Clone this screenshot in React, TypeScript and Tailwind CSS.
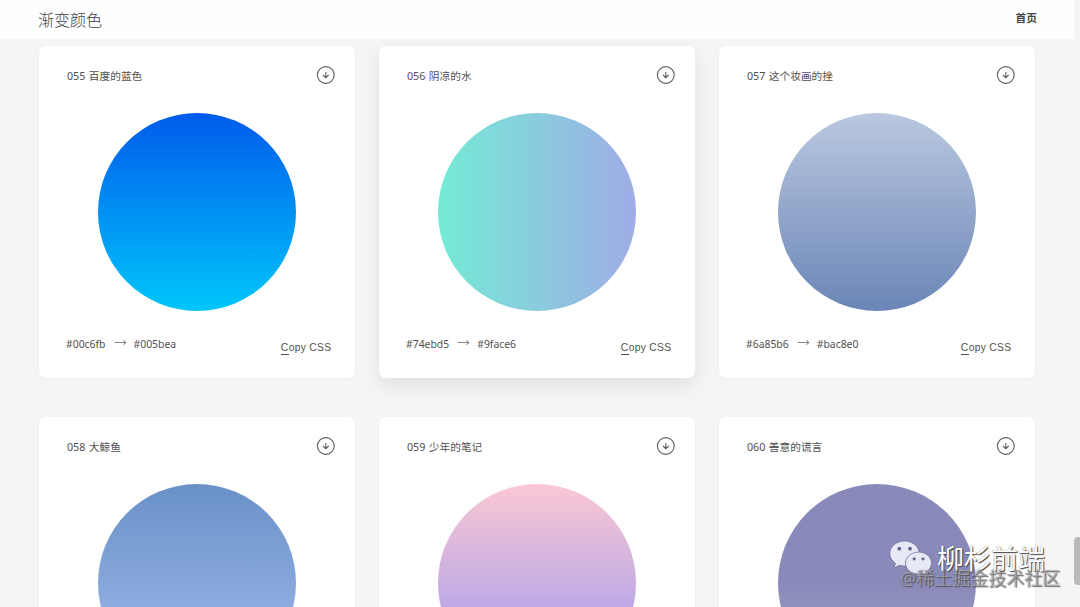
import { clsx } from "clsx"

interface Gradient {
  id: string
  name: string
  from: string
  to: string
  background: string
  active?: boolean
}

const gradients: Gradient[] = [
  {
    id: "055",
    name: "百度的蓝色",
    from: "#00c6fb",
    to: "#005bea",
    background: "linear-gradient(to top, #00c6fb 0%, #005bea 100%)",
  },
  {
    id: "056",
    name: "阴凉的水",
    from: "#74ebd5",
    to: "#9face6",
    background: "linear-gradient(to right, #74ebd5 0%, #9face6 100%)",
    active: true,
  },
  {
    id: "057",
    name: "这个妆画的挫",
    from: "#6a85b6",
    to: "#bac8e0",
    background: "linear-gradient(to top, #6a85b6 0%, #bac8e0 100%)",
  },
  {
    id: "058",
    name: "大鲸鱼",
    from: "#a3bded",
    to: "#6991c7",
    background: "linear-gradient(to top, #a3bded 0%, #6991c7 100%)",
  },
  {
    id: "059",
    name: "少年的笔记",
    from: "#9795f0",
    to: "#fbc8d4",
    background: "linear-gradient(to top, #9795f0 0%, #fbc8d4 100%)",
  },
  {
    id: "060",
    name: "善意的谎言",
    from: "#a7a6cb",
    to: "#8989ba",
    background: "linear-gradient(to top, #a7a6cb 0%, #8989ba 52%, #8989ba 100%)",
  },
]

function DownloadIcon() {
  return (
    <svg width="20" height="20" viewBox="0 0 20 20" fill="none" stroke="#5c5c5c">
      <circle cx="9.8" cy="10" r="8.4" strokeWidth="1.1" />
      <path d="M9.8 7v5.6M7 10l2.8 2.7 2.8-2.7" strokeWidth="1.1" />
    </svg>
  )
}

function ArrowIcon() {
  return (
    <svg width="13" height="7" viewBox="0 0 13 7" fill="none" stroke="#666" strokeWidth="0.8">
      <path d="M0.5 3.5h11.5M9.2 1.3l2.8 2.2-2.8 2.2" />
    </svg>
  )
}

function GradientCard({ gradient }: { gradient: Gradient }) {
  return (
    <article
      className={clsx(
        "h-[332px] rounded-[7px] bg-white pl-7 pr-[19px] pt-[19px]",
        gradient.active
          ? "shadow-[0_7px_20px_rgba(0,0,0,0.09)]"
          : "shadow-[0_1px_3px_rgba(0,0,0,0.04)]"
      )}
    >
      <div className="flex h-5 items-center justify-between">
        <h2 className="flex gap-[3.5px] whitespace-nowrap pt-0.5 text-[10.7px] text-[#505050]">
          <span>{gradient.id}</span>
          <span>{gradient.name}</span>
        </h2>
        <button type="button">
          <DownloadIcon />
        </button>
      </div>

      <div
        className="ml-[31px] mt-7 size-[198px] rounded-full"
        style={{ background: gradient.background }}
      />

      <div className="mt-[25px] flex items-start justify-between pr-[4.5px] text-[#505050]">
        <div className="-ml-px flex h-[18px] items-center text-[10.4px]">
          <span>{gradient.from}</span>
          <span className="-mt-[5px] ml-2 mr-[7px]">
            <ArrowIcon />
          </span>
          <span>{gradient.to}</span>
        </div>
        <button
          type="button"
          className="mt-1 h-4 font-['Liberation_Sans',Arial,sans-serif] text-[10.3px] leading-4 tracking-[0.32px]"
        >
          <span className="inline-block h-[15px] border-b border-[#505050]">C</span>opy CSS
        </button>
      </div>
    </article>
  )
}

function Watermark() {
  return (
    <div className="absolute left-[889px] top-[538px] h-[52px] w-[176px]">
      <svg className="absolute left-0 top-0.5" width="44" height="38" viewBox="0 0 44 38">
        <g fill="#e8e9f6" stroke="#66668c" strokeWidth="0.7">
          <path d="M15.5 1C7.3 1 .8 6.6.8 13.6c0 4 2.3 7.5 5.7 9.8L5 28l5.3-2.7c1.7.5 3.4.7 5.2.7 8.2 0 14.8-5.5 14.8-12.4S23.7 1 15.5 1z" />
          <path d="M29.5 12.1c-7.2 0-13 4.9-13 11s5.8 11 13 11c1.6 0 3.1-.2 4.5-.7l4.3 2.3-1.2-3.7c3.3-2 5.4-5.2 5.4-8.9 0-6.1-5.800-11-13-11z" />
        </g>
        <g fill="#66668c">
          <circle cx="10.3" cy="8.7" r="1.9" />
          <circle cx="21" cy="8.7" r="1.9" />
          <circle cx="25.2" cy="18.8" r="1.6" />
          <circle cx="34" cy="18.8" r="1.6" />
        </g>
      </svg>
      <span className="absolute left-12 top-[5px] whitespace-nowrap text-[27px] leading-8 text-white [text-shadow:1px_1px_1px_#444,0_0_1px_#777]">
        柳杉前端
      </span>
      <span className="absolute left-[11px] top-[28px] whitespace-nowrap text-[18px] leading-6 text-[#c8c8d0]/50 [text-shadow:1px_1px_1px_#444c,0_0_1px_#6668]">
        @稀土掘金技术社区
      </span>
    </div>
  )
}

export default function App() {
  return (
    <div className="relative h-[607px] w-[1080px] overflow-hidden bg-[#f5f5f5] font-['Noto_Sans','Noto_Sans_CJK_SC',sans-serif]">
      <header className="flex h-[39px] w-[1074px] items-center justify-between bg-[#fefefe] pl-[38px] pr-[37px]">
        <h1 className="text-base font-light text-[#444]">渐变颜色</h1>
        <a className="-mt-0.5 text-[10.7px] font-bold text-[#444]">首页</a>
      </header>

      <main className="grid grid-cols-[repeat(3,316px)] gap-x-6 gap-y-[39.4px] pl-[39px] pt-[7px]">
        {gradients.map((gradient) => (
          <GradientCard key={gradient.id} gradient={gradient} />
        ))}
      </main>

      <div className="absolute left-[1074px] top-[537px] h-12 w-2 rounded-full bg-[#bababa]" />
      <Watermark />
    </div>
  )
}
